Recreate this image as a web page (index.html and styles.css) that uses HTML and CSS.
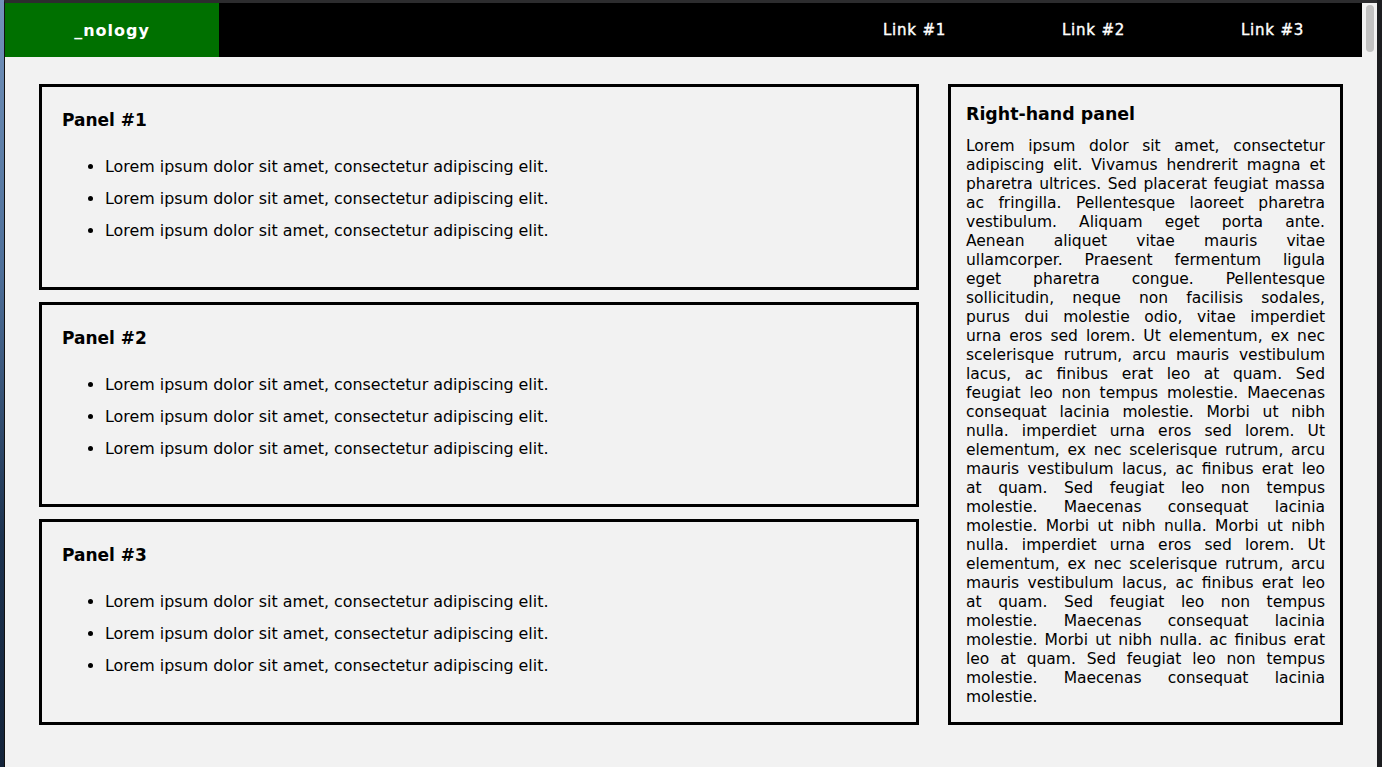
FILE: index.html
```html
<!doctype html>
<html>
  <head>
    <title>_nology</title>
    <link rel="stylesheet" href="styles.css">
  </head>
  <body>
    <div class="desktop-edge"></div>
    <div class="window">
      <div class="page">
        <header class="navbar">
          <div class="brand">_nology</div>
          <nav class="nav-links">
            <a href="#">Link #1</a>
            <a href="#">Link #2</a>
            <a href="#">Link #3</a>
          </nav>
        </header>

        <main class="content">
          <div class="left-column">
            <section class="panel">
              <h2>Panel #1</h2>
              <ul>
                <li>Lorem ipsum dolor sit amet, consectetur adipiscing elit.</li>
                <li>Lorem ipsum dolor sit amet, consectetur adipiscing elit.</li>
                <li>Lorem ipsum dolor sit amet, consectetur adipiscing elit.</li>
              </ul>
            </section>
            <section class="panel">
              <h2>Panel #2</h2>
              <ul>
                <li>Lorem ipsum dolor sit amet, consectetur adipiscing elit.</li>
                <li>Lorem ipsum dolor sit amet, consectetur adipiscing elit.</li>
                <li>Lorem ipsum dolor sit amet, consectetur adipiscing elit.</li>
              </ul>
            </section>
            <section class="panel">
              <h2>Panel #3</h2>
              <ul>
                <li>Lorem ipsum dolor sit amet, consectetur adipiscing elit.</li>
                <li>Lorem ipsum dolor sit amet, consectetur adipiscing elit.</li>
                <li>Lorem ipsum dolor sit amet, consectetur adipiscing elit.</li>
              </ul>
            </section>
          </div>

          <aside class="panel side-panel">
            <h2>Right-hand panel</h2>
            <!-- one span per line so the justified wrap matches the design -->
            <p>
              <span class="line">Lorem ipsum dolor sit amet, consectetur</span>
              <span class="line">adipiscing elit. Vivamus hendrerit magna et</span>
              <span class="line">pharetra ultrices. Sed placerat feugiat massa</span>
              <span class="line">ac fringilla. Pellentesque laoreet pharetra</span>
              <span class="line">vestibulum. Aliquam eget porta ante.</span>
              <span class="line">Aenean aliquet vitae mauris vitae</span>
              <span class="line">ullamcorper. Praesent fermentum ligula</span>
              <span class="line">eget pharetra congue. Pellentesque</span>
              <span class="line">sollicitudin, neque non facilisis sodales,</span>
              <span class="line">purus dui molestie odio, vitae imperdiet</span>
              <span class="line">urna eros sed lorem. Ut elementum, ex nec</span>
              <span class="line">scelerisque rutrum, arcu mauris vestibulum</span>
              <span class="line">lacus, ac finibus erat leo at quam. Sed</span>
              <span class="line">feugiat leo non tempus molestie. Maecenas</span>
              <span class="line">consequat lacinia molestie. Morbi ut nibh</span>
              <span class="line">nulla. imperdiet urna eros sed lorem. Ut</span>
              <span class="line">elementum, ex nec scelerisque rutrum, arcu</span>
              <span class="line">mauris vestibulum lacus, ac finibus erat leo</span>
              <span class="line">at quam. Sed feugiat leo non tempus</span>
              <span class="line">molestie. Maecenas consequat lacinia</span>
              <span class="line">molestie. Morbi ut nibh nulla. Morbi ut nibh</span>
              <span class="line">nulla. imperdiet urna eros sed lorem. Ut</span>
              <span class="line">elementum, ex nec scelerisque rutrum, arcu</span>
              <span class="line">mauris vestibulum lacus, ac finibus erat leo</span>
              <span class="line">at quam. Sed feugiat leo non tempus</span>
              <span class="line">molestie. Maecenas consequat lacinia</span>
              <span class="line">molestie. Morbi ut nibh nulla. ac finibus erat</span>
              <span class="line">leo at quam. Sed feugiat leo non tempus</span>
              <span class="line">molestie. Maecenas consequat lacinia</span>
              <span class="line">molestie.</span>
            </p>
          </aside>
        </main>
      </div>
      <div class="scrollbar"><div class="thumb"></div></div>
    </div>
  </body>
</html>
```

FILE: styles.css
```css
body {
  margin: 0;
  height: 767px;
  overflow: hidden;
  display: flex;
  background-color: #1c1d20;
  font-family: "DejaVu Sans", sans-serif;
  color: #000;
}
.desktop-edge {
  width: 4px;
  flex: none;
  background: linear-gradient(#7393bb, #4f709a 35%, #1d3350 70%, #14243a);
}
.window {
  display: flex;
  flex: none;
  border-top: 3px solid #2c2c2e;
  border-left: 1px solid #111;
}
.page {
  width: 1357px;
  background-color: #f2f2f2;
}
.scrollbar {
  width: 15px;
  background-color: #f2f2f2;
  padding: 2px 0 0 4px;
  box-sizing: border-box;
}
.thumb {
  width: 8px;
  height: 47px;
  border-radius: 4px;
  background-color: #c2c2c2;
}
.navbar {
  display: flex;
  height: 54px;
  background-color: #000;
}
.brand {
  width: 214px;
  display: flex;
  align-items: center;
  justify-content: center;
  background-color: #007000;
  color: #fff;
  font-size: 16px;
  font-weight: bold;
  letter-spacing: 1px;
}
.nav-links {
  display: flex;
  margin-left: auto;
}
.nav-links a {
  width: 179px;
  display: flex;
  align-items: center;
  justify-content: center;
  color: #fff;
  text-decoration: none;
  font-size: 15px;
  letter-spacing: 0.8px;
  -webkit-text-stroke: 0.4px #fff;
}
.content {
  display: flex;
  height: 641px;
  gap: 29px;
  padding: 27px 19px 0 34px;
}
.left-column {
  width: 880px;
  display: flex;
  flex-direction: column;
  gap: 12px;
}
.panel {
  flex: 1;
  border: 3px solid #000;
  padding: 22px 20px 20px;
}
.panel h2 {
  margin: 0;
  font-size: 17px;
  line-height: 22px;
}
.panel ul {
  margin: 20px 0 0;
  padding-left: 43px;
  font-size: 15.9px;
  line-height: 32px;
}
.side-panel {
  flex: none;
  box-sizing: border-box;
  width: 395px;
  padding: 16px 15px 16px;
}
.side-panel h2 {
  font-size: 17.4px;
}
.side-panel p {
  margin: 12px 0 0;
  font-size: 15.5px;
  line-height: 19px;
}
.side-panel .line {
  display: block;
  white-space: nowrap;
  text-align: justify;
  text-align-last: justify;
}
.side-panel .line:last-child {
  text-align-last: left;
}
```
